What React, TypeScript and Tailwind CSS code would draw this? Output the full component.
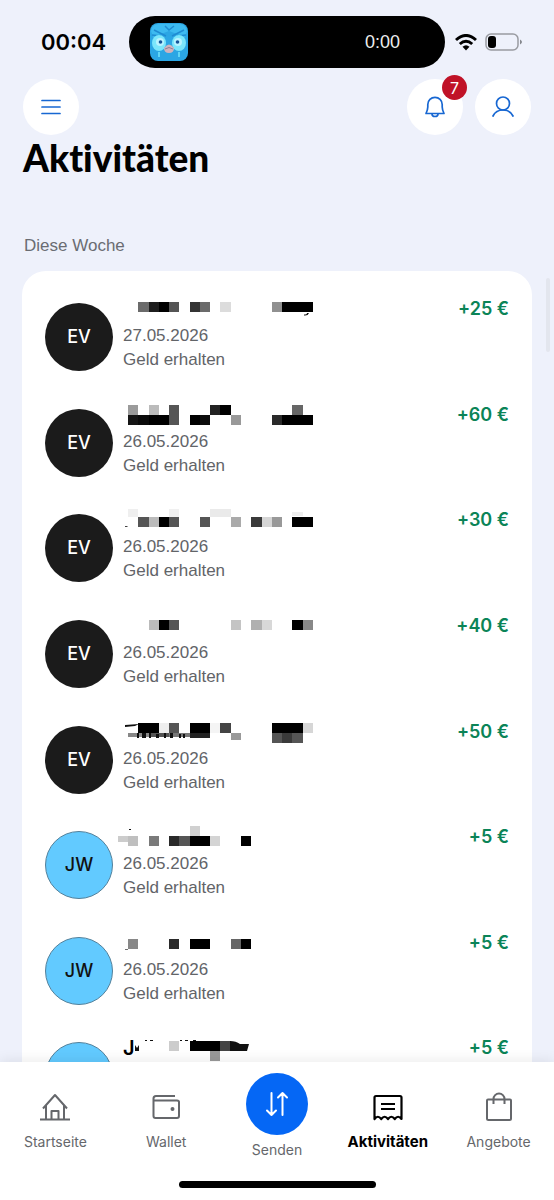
import type { ReactNode } from "react";

// [column, y, gray, columns wide = 1, height = 10]
type Cell = [number, number, string, number?, number?];

interface Activity {
  initials: string;
  date: string;
  amount: string;
  name?: string;
  cells: Cell[];
  scraps?: string;
}

const COL = 10.27;

const activities: Activity[] = [
  {
    initials: "EV",
    date: "27.05.2026",
    amount: "+25 €",
    cells: [
      [1, 5, "#6b6b6b"], [2, 5, "#1e1e1e"], [3, 5, "#000"], [4, 5, "#555"],
      [6, 5, "#343434"], [7, 5, "#6b6b6b"], [9, 5, "#dcdcdc"],
      [14, 5, "#909090"], [15, 5, "#000", 3],
    ],
    scraps: "M181 18.500q4 .5 5-2.500h-2q0 1.500-3 1.500z",
  },
  {
    initials: "EV",
    date: "26.05.2026",
    amount: "+60 €",
    cells: [
      [0, 2, "#9b9b9b"], [2, 2, "#bbb"], [4, 2, "#555"], [8, 2, "#222"], [9, 2, "#000"], [16, 2, "#666"],
      [0, 12, "#151515"], [1, 12, "#0b0b0b"], [2, 12, "#000", 2], [4, 12, "#555"],
      [6, 12, "#000"], [7, 12, "#0d0d0d"], [10, 12, "#999"], [14, 12, "#2a2a2a"], [15, 12, "#000", 3],
    ],
  },
  {
    initials: "EV",
    date: "26.05.2026",
    amount: "+30 €",
    cells: [
      [0, 1, "#efefef", 1, 8], [4, 1, "#f0f0f0", 1, 8], [8, 1, "#eaeaea", 2, 8], [16, 4, "#eee", 1, 4],
      [1, 9, "#555"], [2, 9, "#bbb"], [3, 9, "#000"], [4, 9, "#555"], [7, 9, "#555"], [10, 9, "#aaa"],
      [12, 9, "#3a3a3a"], [13, 9, "#d6d6d6"], [14, 9, "#999"], [16, 9, "#000", 2],
    ],
    scraps: "M2 18h2.500v.8H2z",
  },
  {
    initials: "EV",
    date: "26.05.2026",
    amount: "+40 €",
    cells: [
      [2, 6, "#bbb"], [3, 6, "#000"], [4, 6, "#555"], [10, 6, "#c4c4c4"],
      [12, 6, "#b0b0b0"], [13, 6, "#d8d8d8"], [16, 6, "#000"], [17, 6, "#888"],
    ],
  },
  {
    initials: "EV",
    date: "26.05.2026",
    amount: "+50 €",
    cells: [
      [1, 3, "#000", 2], [3, 3, "#eee"], [4, 3, "#555"], [6, 3, "#000", 2], [8, 3, "#f4f4f4"],
      [9, 3, "#444"], [14, 3, "#000", 3], [17, 3, "#d6d6d6"],
      [0, 13, "#888", 2, 4], [2, 13, "#555", 2, 4], [4, 13, "#777", 2, 4], [6, 13, "#222", 2, 5],
      [10, 13, "#999", 1, 7], [14, 13, "#555"], [15, 13, "#3a3a3a"], [16, 13, "#555"],
    ],
    scraps: "M2 5l14-1-4 2-10 1zM14 13h2v5h-2zM19 13h4v5h-4zM26 13h2v5h-2zM33 14h3v4h-3zM41 13h2v5h-2zM47 13h3v5h-3zM56 14h2v4h-2zM60 14h2v4h-2z",
  },
  {
    initials: "JW",
    date: "26.05.2026",
    amount: "+5 €",
    cells: [
      [6, 1, "#d0d0d0"],
      [-1, 11, "#ccc", 1, 6], [0, 11, "#bfbfbf"], [2, 11, "#7a7a7a"], [4, 11, "#2a2a2a"], [5, 11, "#555"],
      [6, 11, "#000", 2], [8, 11, "#d4d4d4"], [11, 11, "#000"],
    ],
    scraps: "M6 4h2v1H6z",
  },
  {
    initials: "JW",
    date: "26.05.2026",
    amount: "+5 €",
    cells: [
      [0, 8, "#888"], [4, 8, "#2a2a2a"], [6, 8, "#000", 2], [10, 8, "#666"], [11, 8, "#000"],
    ],
    scraps: "M2 18h3v.6H2z",
  },
  {
    initials: "JW",
    date: "26.05.2026",
    amount: "+5 €",
    name: "J",
    cells: [
      [4, 5, "#ccc"], [6, 5, "#000", 3], [9, 5, "#444"], [8, 15, "#999"],
    ],
    scraps: "M12 9l2 3 2-3v6h-4zM22 4h2v1h-2zM27 4h3v1h-3zM57 4h2v1h-2zM62 4h3v1h-3zM70 4h3v1h-3zM107 5q6 0 10 3l9 0-2 7h-17z",
  },
];

function MaskedName({ cells, scraps }: { cells: Cell[]; scraps?: string }) {
  return (
    <svg width="200" height="27" className="block overflow-visible" shapeRendering="crispEdges" aria-hidden="true">
      {cells.map(([col, y, fill, span = 1, height = 10]) => (
        <rect key={`${col}-${y}`} x={5 + col * COL} y={y} width={span * COL} height={height} fill={fill} />
      ))}
      {scraps && <path d={scraps} fill="#111" shapeRendering="auto" />}
    </svg>
  );
}

function ActivityRow({ activity }: { activity: Activity }) {
  const isCompany = activity.initials === "EV";

  return (
    <li className="flex items-start gap-2.5">
      <div
        className={`mt-1.5 flex size-[68px] shrink-0 items-center justify-center rounded-full text-lg font-medium ${
          isCompany ? "bg-[#1b1b1b] text-white" : "border border-[#54819b] bg-[#62caff] text-[#111]"
        }`}
      >
        {activity.initials}
      </div>
      <div className="min-w-0 flex-1 font-['Liberation_Sans',sans-serif] text-[17px] leading-6 text-[#626468]">
        <div className="grid h-[27px] font-['Inter',sans-serif] text-xl leading-6 font-semibold text-black *:[grid-area:1/1]">
          {activity.name && <span>{activity.name}</span>}
          <MaskedName cells={activity.cells} scraps={activity.scraps} />
        </div>
        <p>{activity.date}</p>
        <p>Geld erhalten</p>
      </div>
      <p className="text-lg leading-6 font-semibold whitespace-nowrap text-[#0b8457]">{activity.amount}</p>
    </li>
  );
}

function StatusBar() {
  return (
    <div className="flex items-center pt-4">
      <span className="w-[129px] pl-[41px] text-[22px] leading-[52px] font-semibold">00:04</span>
      <div className="flex h-[52px] flex-1 items-center justify-between rounded-full bg-black pr-[45px] pl-[21px]">
        <svg width="38" height="38" viewBox="0 0 38 38" aria-hidden="true">
          <rect width="38" height="38" rx="8" fill="#2ba6e4" />
          <path d="M1 8Q2 1 9 1h20q7 0 8 7l-2 6-16-6L3 14z" fill="#3dbaf0" />
          <path d="M4 7l12 6M2 12l9 1M34 7l-12 6M36 12l-9 1M15 3l4 4 5-4" stroke="#1f8bd2" strokeWidth="1.500" fill="none" />
          <ellipse cx="9" cy="20" rx="7" ry="8" fill="#7be6fb" />
          <ellipse cx="29" cy="20" rx="7" ry="8" fill="#7be6fb" />
          <circle cx="10" cy="19" r="4" fill="#b9f3ff" />
          <circle cx="28" cy="19" r="4" fill="#b9f3ff" />
          <circle cx="10.500" cy="19" r="1.800" fill="#15549a" />
          <circle cx="27.500" cy="19" r="1.800" fill="#15549a" />
          <path d="M14 25q5-7 10 0 0 5-5 5t-5-5z" fill="#d0b3bd" />
          <path d="M15 26q4-3 8 0" stroke="#8d8097" fill="none" />
          <path d="M9 29v5M29 29v5" stroke="#60d5f6" strokeWidth="2" />
        </svg>
        <span className="font-['Liberation_Sans',sans-serif] text-lg text-[#eee]">0:00</span>
      </div>
      <div className="flex w-[109px] items-center gap-2 pl-2.5">
        <svg width="22" height="17" viewBox="0 0 22 17" fill="none" stroke="#000" strokeWidth="3" aria-hidden="true">
          <path d="M1 6Q11-3 21 6" />
          <path d="M4.800 10Q11 4.500 17.200 10" />
          <path d="M11 16.500l-3.500-3.700q3.500-3 7 0z" fill="#000" stroke="none" />
        </svg>
        <svg width="38" height="18" viewBox="0 0 38 18" aria-hidden="true">
          <rect x="1" y="1" width="32" height="16" rx="5" fill="none" stroke="#999ba1" strokeWidth="1.500" />
          <rect x="3" y="3" width="8" height="12" rx="3" fill="#000" />
          <path d="M35 6.500q4 2.500 0 5z" fill="#85878d" />
        </svg>
      </div>
    </div>
  );
}

function RoundButton({ label, badge, children }: { label: string; badge?: number; children: ReactNode }) {
  return (
    <button aria-label={label} className="relative flex size-14 items-center justify-center rounded-full bg-white text-[#1767d2]">
      <svg width="24" height="24" viewBox="0 0 24 24" fill="none" stroke="currentColor" strokeWidth="1.700" strokeLinecap="round" strokeLinejoin="round">
        {children}
      </svg>
      {badge && (
        <span className="absolute -top-1 -right-1 flex size-[25px] items-center justify-center rounded-full bg-[#c01227] text-base text-white">
          {badge}
        </span>
      )}
    </button>
  );
}

function NavItem({ label, active, children }: { label: string; active?: boolean; children: ReactNode }) {
  return (
    <a
      href="#"
      aria-current={active ? "page" : undefined}
      className={`flex flex-1 flex-col items-center pt-[29px] leading-5 ${
        active ? "text-[15px] font-bold text-black" : "text-sm text-[#65676b]"
      }`}
    >
      <svg width="32" height="32" viewBox="0 0 32 32" fill="none" stroke="currentColor" strokeWidth={active ? 2.2 : 2} strokeLinejoin="round" className="mb-[9px]">
        {children}
      </svg>
      {label}
    </a>
  );
}

export default function App() {
  return (
    <div className="flex h-screen flex-col overflow-hidden bg-[#eef1fb] font-['Inter',sans-serif] text-black">
      <header className="shrink-0">
        <StatusBar />
        <div className="flex gap-3 px-[23px] pt-[11px]">
          <RoundButton label="Menü">
            <path d="M3 5.500h18M3 12h18M3 18.500h18" />
          </RoundButton>
          <div className="flex-1" />
          <RoundButton label="Mitteilungen" badge={7}>
            <path d="M3 18.500q1.800-4 1.800-6.500V9.500a7.200 7.200 0 0 1 14.400 0V12q0 2.500 1.800 6.500z" />
            <path d="M9 19a3 2.500 0 0 0 6 0" />
          </RoundButton>
          <RoundButton label="Profil">
            <circle cx="12" cy="8.500" r="6.500" />
            <path d="M2 21q3-6 10-6t10 6" />
          </RoundButton>
        </div>
        <h1 className="px-[23px] pt-[3px] pb-px font-['Lato',sans-serif] text-[37px] leading-10 font-black [font-variant-ligatures:none]">
          Aktivitäten
        </h1>
      </header>

      <div className="relative flex min-h-0 flex-1 flex-col">
        <main className="min-h-0 flex-1 overflow-y-auto px-[22px] pt-[55px] [scrollbar-width:none]">
          <h2 className="mb-[13px] px-0.5 font-['Liberation_Sans',sans-serif] text-[17px] leading-6 text-[#6a6c72]">Diese Woche</h2>
          <ul className="grid min-h-[871px] auto-rows-fr rounded-3xl bg-white px-[23px] pt-[26px]">
            {activities.map((activity, i) => (
              <ActivityRow key={i} activity={activity} />
            ))}
          </ul>
        </main>
        <div className="absolute top-[99px] right-1 h-[74px] w-1 rounded-full bg-[#e3e6ee]" />
      </div>

      <nav className="relative shrink-0 bg-white shadow-[0_-2px_12px_rgba(0,0,0,0.08)]">
        <div className="flex h-[119px]">
          <NavItem label="Startseite">
            <path d="M4 17.500L16 4l12 13.500M7 14.500v14M25 14.500v14M1 28.500h30M12.500 28v-8h7v8" />
          </NavItem>
          <NavItem label="Wallet">
            <path d="M25 5H6q-2.500 0-2.500 2.500V25q0 2 2 2H27q2 0 2-2V11q0-1.500-2-1.500H4" />
            <circle cx="22.500" cy="18" r="1" fill="currentColor" />
          </NavItem>
          <a href="#" className="flex flex-1 flex-col items-center pt-[11px] text-sm leading-5 text-[#65676b]">
            <span className="mb-[5px] flex size-[62px] items-center justify-center rounded-full bg-[#0567f5] text-white">
              <svg width="28" height="28" viewBox="0 0 28 28" fill="none" stroke="currentColor" strokeWidth="2" strokeLinecap="round" strokeLinejoin="round">
                <path d="M8.500 3v22M4 20.500l4.500 4.500 4.500-4.500M19.500 25V3M15 7.500L19.500 3 24 7.500" />
              </svg>
            </span>
            Senden
          </a>
          <NavItem label="Aktivitäten" active>
            <path d="M2.500 28V6.500q0-1.500 1.500-1.500h24q1.500 0 1.500 1.500V28q-3.400-4.500-6.750 0-3.400-4.500-6.750 0-3.400-4.500-6.750 0-3.400-4.500-6.750 0z" />
            <path d="M9 13h14M9 18h14" />
          </NavItem>
          <NavItem label="Angebote">
            <path d="M5 8.500h22q1 0 1 1v18q0 1.500-1.500 1.500h-21Q4 29 4 27.500v-18q0-1 1-1zM10.500 13V8a5.500 5.500 0 0 1 11 0v5" />
          </NavItem>
        </div>
        <div className="mx-auto mb-3 h-[7px] w-[197px] rounded-full bg-black" />
      </nav>
    </div>
  );
}
